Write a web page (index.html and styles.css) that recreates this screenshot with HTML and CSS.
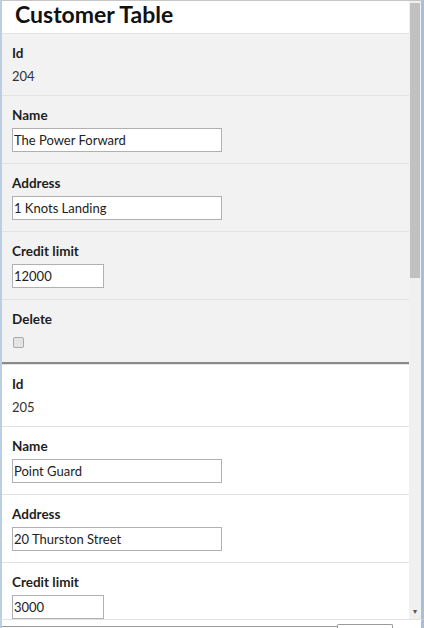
FILE: index.html
```html
<!doctype html>
<html lang="en">
<head>
  <meta charset="utf-8">
  <title>Customer Table</title>
  <link rel="stylesheet" href="styles.css">
</head>
<body>

	<div class="window">
		<div class="page">
			<h1 class="title">Customer Table</h1>

			<!-- one block per customer, clipped at the bottom of the window -->
			<div class="list">
				<div class="record selected">
					<div class="field first">
						<div class="label">Id</div>
						<div class="value">204</div>
					</div>
					<div class="field edit">
						<div class="label">Name</div>
						<input class="box wide" type="text" value="The Power Forward">
					</div>
					<div class="field edit">
						<div class="label">Address</div>
						<input class="box wide" type="text" value="1 Knots Landing">
					</div>
					<div class="field edit">
						<div class="label">Credit limit</div>
						<input class="box narrow" type="text" value="12000">
					</div>
					<div class="field">
						<div class="label">Delete</div>
						<div class="check-row"><input class="check" type="checkbox"></div>
					</div>
				</div>

				<div class="record">
					<div class="field first">
						<div class="label">Id</div>
						<div class="value">205</div>
					</div>
					<div class="field edit">
						<div class="label">Name</div>
						<input class="box wide" type="text" value="Point Guard">
					</div>
					<div class="field edit">
						<div class="label">Address</div>
						<input class="box wide" type="text" value="20 Thurston Street">
					</div>
					<div class="field edit">
						<div class="label">Credit limit</div>
						<input class="box narrow" type="text" value="3000">
					</div>
				</div>
			</div>
		</div>

		<div class="scrollbar">
			<div class="thumb"></div>
			<div class="arrow">&#9662;</div>
		</div>
	</div>

	<div class="footer">
		<div class="tab"></div>
	</div>

</body>
</html>
```

FILE: styles.css
```css
body {
	margin			: 0;
	background		: #fff;
	font-family		: "Lato", "Open Sans", sans-serif;
	color			: #1e1e1e;
}

.window {
	display			: flex;
	height			: 620px;
	box-sizing		: border-box;
	border-top		: 1px solid #c6c6c6;
	border-bottom	: 1px solid #e2e2e2;
	border-left		: 2px solid #bccfe2;
	border-right	: 3px solid #a9bfd6;
}

.page {
	flex			: 1;
	display			: flex;
	flex-direction	: column;
	min-width		: 0;
}

.title {
	margin			: 0;
	padding			: 0 13px;
	height			: 32px;
	font-size		: 23px;
	line-height		: 27px;
	font-weight		: 700;
	color			: #111;
}

.list {
	flex			: 1;
	overflow		: hidden;
}

.record {
	border-top		: 1px solid #e2e2e2;
	background		: #fff;
}

.record.selected {
	background		: #f2f2f2;
	border-bottom	: 2px solid #8a8a8a;
}

.field {
	padding			: 9px 10px 10px;
	border-bottom	: 1px solid #e2e2e2;
}

.field.first {
	padding-bottom	: 9px;
}

.field.edit {
	padding-bottom	: 11px;
}

.record.selected .field:last-child {
	border-bottom	: none;
}

.label {
	font-size		: 13.5px;
	line-height		: 20px;
	font-weight		: 700;
}

.value {
	margin-top		: 3px;
	font-size		: 13px;
	line-height		: 20px;
	color			: #333;
}

.box {
	display			: block;
	margin-top		: 3px;
	height			: 24px;
	box-sizing		: border-box;
	padding			: 0 1px;
	border			: 1px solid #b0b0b0;
	background		: #fff;
	font-family		: inherit;
	font-size		: 13px;
	color			: #222;
}

.wide {
	width			: 210px;
}

.narrow {
	width			: 92px;
}

.check-row {
	margin-top		: 3px;
	height			: 20px;
	display			: flex;
	align-items		: center;
}

.check {
	-webkit-appearance: none;
	appearance		: none;
	margin			: 0 0 0 1px;
	width			: 11px;
	height			: 11px;
	border			: 1px solid #a8a8a8;
	border-radius	: 2px;
	background		: #e4e4e4;
}

.scrollbar {
	width			: 12px;
	padding			: 2px 1px 0;
	box-sizing		: border-box;
	background		: #f0f0f0;
	display			: flex;
	flex-direction	: column;
}

.thumb {
	height			: 275px;
	background		: #c1c1c1;
}

.arrow {
	margin-top		: auto;
	margin-bottom	: 4px;
	font-size		: 8px;
	line-height		: 8px;
	text-align		: center;
	color			: #555;
}

.footer {
	height			: 8px;
	display			: flex;
	align-items		: flex-end;
	border-left		: 2px solid #bccfe2;
	border-right	: 3px solid #a9bfd6;
}

.footer::before {
	content			: "";
	width			: 335px;
	height			: 1px;
	margin-bottom	: 1px;
	background		: #9a9a9a;
}

.tab {
	width			: 54px;
	height			: 3px;
	border			: 1px solid #9a9a9a;
	border-bottom	: none;
	border-radius	: 2px 2px 0 0;
}
```
